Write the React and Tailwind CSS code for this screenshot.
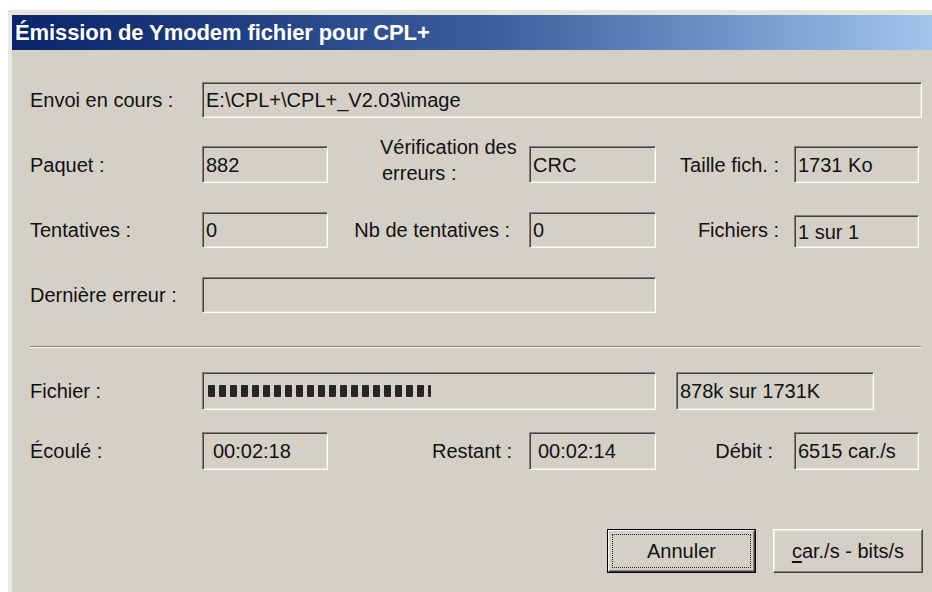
import React from "react";

const sunken =
  "border border-t-[#808080] border-l-[#808080] border-b-white border-r-white shadow-[inset_1px_1px_0_#404040,inset_-1px_-1px_0_#e4e1da] bg-[#d4d0c8] flex items-center pl-[3px] overflow-hidden whitespace-nowrap";

function Field({ className = "", children }) {
  return <div className={`${sunken} ${className}`}>{children}</div>;
}

function Label({ className = "", children }) {
  return <div className={`flex items-center whitespace-nowrap ${className}`}>{children}</div>;
}

// 20 full progress segments plus a partial one
const blocks = Array.from({ length: 21 }, (_, i) => i);

export default function App() {
  return (
    <div className="w-[932px] h-[592px] overflow-hidden bg-white pt-[10px] pl-[8px] font-['Liberation_Sans',Arial,sans-serif] text-[20px] text-[#111]">
      <div className="h-[600px] w-[940px] border-l-[4px] border-t-[5px] border-l-[#ebe9e3] border-t-[#e6e3dc] bg-[#d4d0c8] flex flex-col">
        {/* title bar */}
        <div className="h-[35px] shrink-0 bg-linear-to-r from-[#0a246a] via-[#3a5c9c] to-[#a6caf0] flex items-center pl-[3px]">
          <span className="text-white font-bold text-[22px] tracking-[-0.1px]">
            Émission de Ymodem fichier pour CPL+
          </span>
        </div>

        {/* dialog body */}
        <div className="flex flex-col pt-[32px] pl-[18px]">
          {/* Envoi en cours */}
          <div className="flex h-[36px]">
            <Label className="w-[172px]">Envoi en cours :</Label>
            <Field className="w-[720px]">E:\CPL+\CPL+_V2.03\image</Field>
          </div>

          {/* Paquet / Vérification / Taille */}
          <div className="flex h-[37px] mt-[28px]">
            <Label className="w-[172px]">Paquet :</Label>
            <Field className="w-[126px]">882</Field>
            <div className="w-[201px] pl-[52px] flex items-center">
              <div className="leading-[26px] mb-[10px]">
                <div>Vérification des</div>
                <div className="pl-[2px]">erreurs :</div>
              </div>
            </div>
            <Field className="w-[127px]">CRC</Field>
            <Label className="w-[138px] justify-end pr-[15px]">Taille fich. :</Label>
            <Field className="w-[125px]">1731 Ko</Field>
          </div>

          {/* Tentatives */}
          <div className="flex h-[36px] mt-[29px]">
            <Label className="w-[172px]">Tentatives :</Label>
            <Field className="w-[126px]">0</Field>
            <Label className="w-[201px] justify-end pr-[19px]">Nb de tentatives :</Label>
            <Field className="w-[127px]">0</Field>
            <Label className="w-[138px] justify-end pr-[15px]">Fichiers :</Label>
            <Field className="w-[125px] mt-[3px]">1 sur 1</Field>
          </div>

          {/* Dernière erreur */}
          <div className="flex h-[36px] mt-[29px]">
            <Label className="w-[172px]">Dernière erreur :</Label>
            <Field className="w-[454px]" />
          </div>

          {/* separator */}
          <div className="mt-[33px] w-[891px] h-[2px] border-t border-t-[#808080] border-b border-b-white" />

          {/* Fichier progress */}
          <div className="flex h-[38px] mt-[24px]">
            <Label className="w-[172px]">Fichier :</Label>
            <Field className="w-[454px] pl-[5px] gap-[4px]">
              {blocks.map((i) => (
                <div
                  key={i}
                  className={`h-[12px] bg-[#262626] rounded-[1px] ${i === 20 ? "w-[3px]" : "w-[7px]"}`}
                />
              ))}
            </Field>
            <Field className="w-[198px] ml-[20px]">878k sur 1731K</Field>
          </div>

          {/* Écoulé / Restant / Débit */}
          <div className="flex h-[38px] mt-[22px]">
            <Label className="w-[172px]">Écoulé :</Label>
            <Field className="w-[126px] pl-[10px]">00:02:18</Field>
            <Label className="w-[201px] justify-end pr-[17px]">Restant :</Label>
            <Field className="w-[127px] pl-[8px]">00:02:14</Field>
            <Label className="w-[138px] justify-end pr-[21px]">Débit :</Label>
            <Field className="w-[125px]">6515 car./s</Field>
          </div>

          {/* buttons */}
          <div className="flex h-[44px] mt-[59px] pl-[577px] gap-[17px]">
            <button className="w-[149px] h-[44px] border border-black p-0 bg-[#d4d0c8]">
              <div className="h-full w-full border border-t-white border-l-white border-b-[#404040] border-r-[#404040] shadow-[inset_-1px_-1px_0_#808080] p-[3px]">
                <div className="h-full w-full border border-dotted border-[#222] flex items-center justify-center text-[20px]">
                  Annuler
                </div>
              </div>
            </button>
            <button className="w-[150px] h-[44px] border border-t-white border-l-white border-b-[#404040] border-r-[#404040] shadow-[inset_-1px_-1px_0_#808080,inset_1px_1px_0_#ece9e2] bg-[#d4d0c8] flex items-center justify-center text-[20px]">
              <span>
                <span className="underline underline-offset-[3px]">c</span>ar./s - bits/s
              </span>
            </button>
          </div>
        </div>
      </div>
    </div>
  );
}
